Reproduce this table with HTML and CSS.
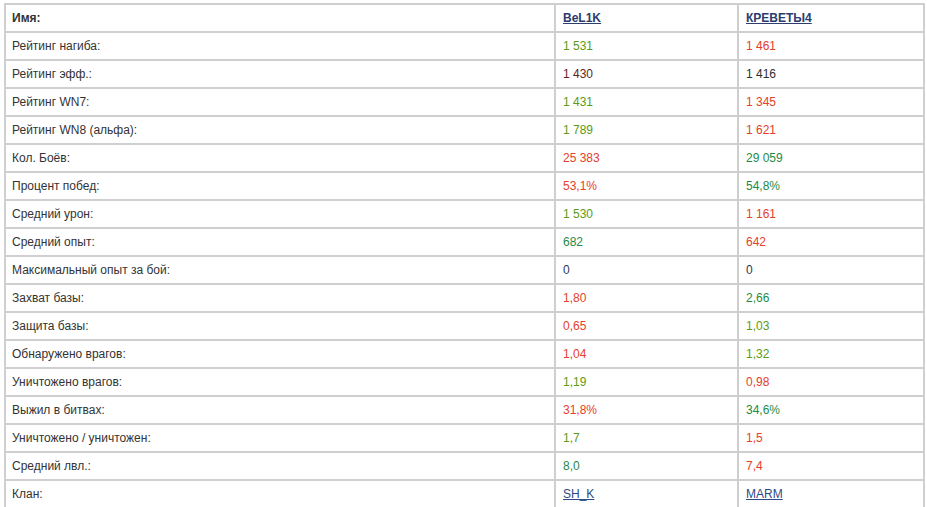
FILE: index.html
```html
<!DOCTYPE html>
<html lang="ru">
<head>
  <meta charset="UTF-8">
  <title>Сравнение игроков</title>
  <link rel="stylesheet" href="styles.css">
</head>
<body>
  <table class="compare">
    <colgroup>
      <col class="col-label">
      <col class="col-player">
      <col class="col-player2">
    </colgroup>
    <tr class="head">
      <td>Имя:</td>
      <td><a href="#">BeL1K</a></td>
      <td><a href="#">КРЕВЕТЫ4</a></td>
    </tr>
    <tr><td>Рейтинг нагиба:</td><td class="c-olive">1 531</td><td class="c-red">1 461</td></tr>
    <tr><td>Рейтинг эфф.:</td><td class="c-brown">1 430</td><td class="c-dark">1 416</td></tr>
    <tr><td>Рейтинг WN7:</td><td class="c-olive">1 431</td><td class="c-red">1 345</td></tr>
    <tr><td>Рейтинг WN8 (альфа):</td><td class="c-olive">1 789</td><td class="c-red">1 621</td></tr>
    <tr><td>Кол. Боёв:</td><td class="c-red">25 383</td><td class="c-green">29 059</td></tr>
    <tr><td>Процент побед:</td><td class="c-red">53,1%</td><td class="c-green">54,8%</td></tr>
    <tr><td>Средний урон:</td><td class="c-olive">1 530</td><td class="c-red">1 161</td></tr>
    <tr><td>Средний опыт:</td><td class="c-green">682</td><td class="c-red">642</td></tr>
    <tr><td>Максимальный опыт за бой:</td><td class="c-navy">0</td><td class="c-navy">0</td></tr>
    <tr><td>Захват базы:</td><td class="c-red">1,80</td><td class="c-green">2,66</td></tr>
    <tr><td>Защита базы:</td><td class="c-red">0,65</td><td class="c-olive">1,03</td></tr>
    <tr><td>Обнаружено врагов:</td><td class="c-red">1,04</td><td class="c-olive">1,32</td></tr>
    <tr><td>Уничтожено врагов:</td><td class="c-olive">1,19</td><td class="c-red">0,98</td></tr>
    <tr><td>Выжил в битвах:</td><td class="c-red">31,8%</td><td class="c-green">34,6%</td></tr>
    <tr><td>Уничтожено / уничтожен:</td><td class="c-olive">1,7</td><td class="c-red">1,5</td></tr>
    <tr><td>Средний лвл.:</td><td class="c-green">8,0</td><td class="c-red">7,4</td></tr>
    <tr><td>Клан:</td><td><a class="clan" href="#">SH_K</a></td><td><a class="clan" href="#">MARM</a></td></tr>
  </table>
</body>
</html>
```

FILE: styles.css
```css
/* General Styles */
body {
  margin: 0;
  background-color: #fff;
  font-family: "Liberation Sans", Arial, sans-serif;
  font-size: 12px;
  color: #333;
}

/* Compare table */
.compare {
  margin: 3px 0 0 4px;
  width: 921px;
  table-layout: fixed;
  border-collapse: separate;
  border-spacing: 0;
  border-top: 2px solid #cfcfcf;
  border-left: 2px solid #cfcfcf;
}

.col-label {
  width: 550px;
}

.col-player {
  width: 183px;
}

.col-player2 {
  width: 186px;
}

.compare td {
  padding: 6px 6px;
  line-height: 14px;
  border-right: 2px solid #cfcfcf;
  border-bottom: 2px solid #cfcfcf;
  white-space: nowrap;
  vertical-align: middle;
}

.compare td + td {
  padding-left: 7px;
}

.head td {
  font-weight: bold;
}

.compare a {
  color: #2b3c6e;
}

.compare a.clan {
  font-weight: normal;
  color: #2d4a87;
}

/* Rating colours */
.c-olive {
  color: #5c9b12;
}

.c-green {
  color: #1f8a45;
}

.c-red {
  color: #e5402a;
}

.c-brown {
  color: #5e1f1f;
}

.c-dark {
  color: #2e2e2e;
}

.c-navy {
  color: #2b3a5a;
}
```
